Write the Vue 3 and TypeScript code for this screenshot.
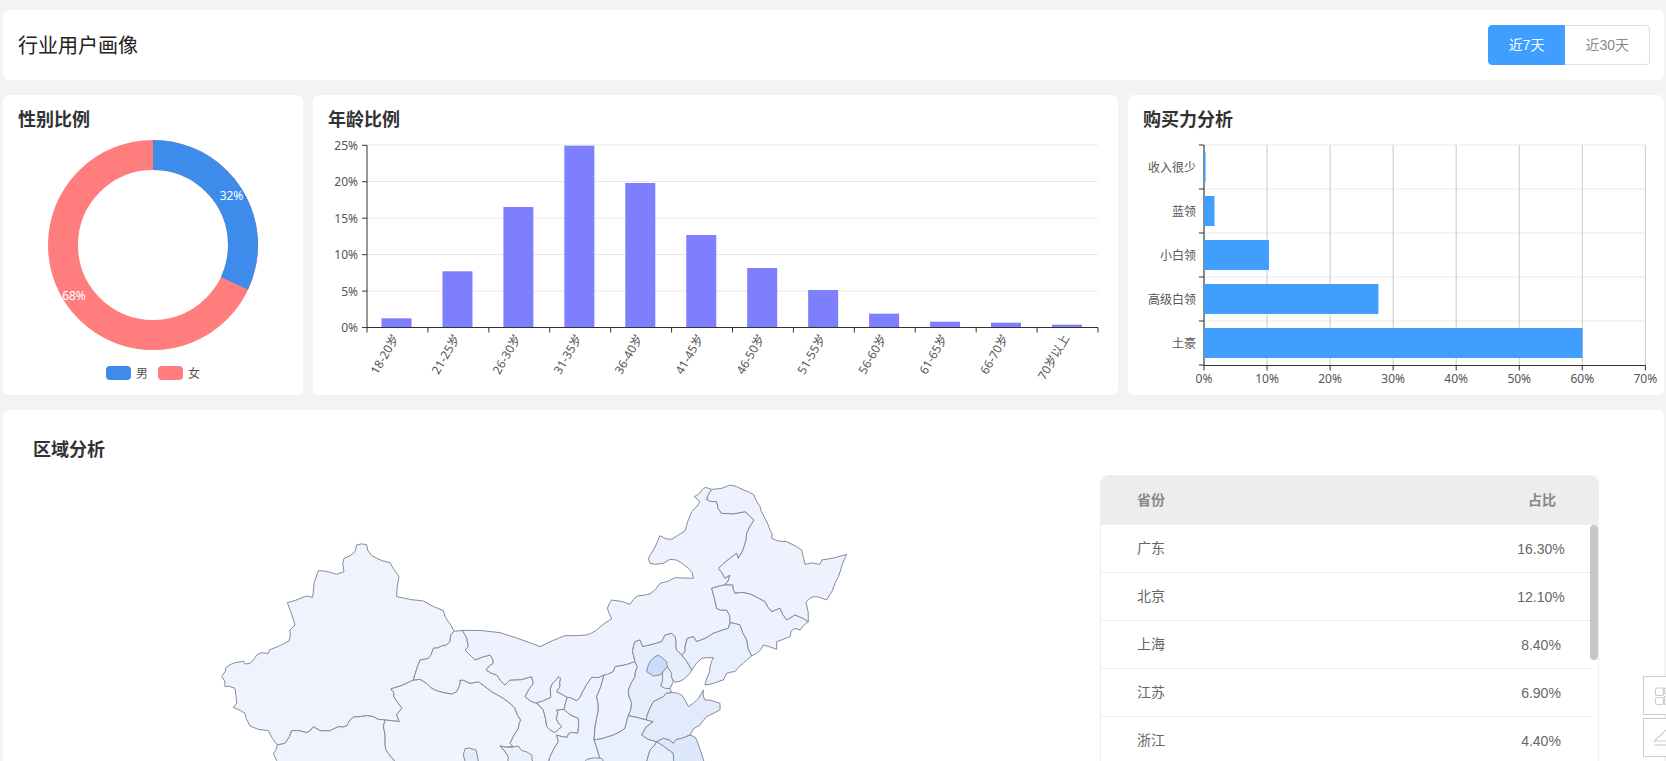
<script setup lang="ts">
// page coordinates are used as the viewBox of each chart
const ageGridLines = [145, 181.5, 218, 254.5, 291]
const yLabels = ['25%', '20%', '15%', '10%', '5%', '0%']
const ageBars = [
  { label: '18-20岁', top: 318.3 },
  { label: '21-25岁', top: 271.3 },
  { label: '26-30岁', top: 207 },
  { label: '31-35岁', top: 145.7 },
  { label: '36-40岁', top: 183 },
  { label: '41-45岁', top: 235 },
  { label: '46-50岁', top: 268 },
  { label: '51-55岁', top: 290 },
  { label: '56-60岁', top: 313.7 },
  { label: '61-65岁', top: 321.7 },
  { label: '66-70岁', top: 322.7 },
  { label: '70岁以上', top: 324.7 }
]
const ageStep = (1098 - 367) / 12
const ageCenter = (i: number): number => 396.5 + 60.95 * i

const powerRows = [
  { label: '收入很少', width: 1.6 },
  { label: '蓝领', width: 10.5 },
  { label: '小白领', width: 65 },
  { label: '高级白领', width: 174.4 },
  { label: '土豪', width: 378.5 }
]
const powerTicks = ['0%', '10%', '20%', '30%', '40%', '50%', '60%', '70%']
const powerX = (i: number): number => 1204 + i * 63.05

const provinces = [
  { name: '广东', share: '16.30%' },
  { name: '北京', share: '12.10%' },
  { name: '上海', share: '8.40%' },
  { name: '江苏', share: '6.90%' },
  { name: '浙江', share: '4.40%' }
]

// map outlines, traced in 3x crops of the map; each helper shifts one crop's origin
const at = (dx: number, dy: number) => (...v: number[]): number[] =>
  v.map((n, i) => n + (i % 2 ? dy : dx))
const a = at(0, 0)
const b = at(1050, 0)
const c = at(750, 510)
const d = at(1170, 420)

// long straight runs get a small kink so borders read as rough; the offset depends
// only on the two end points, so neighbouring regions share the same kink
const roughen = (pts: number[]): number[] => {
  const out: number[] = []
  for (let i = 0; i < pts.length; i += 2) {
    const x = pts[i]
    const y = pts[i + 1]
    const nx = pts[(i + 2) % pts.length]
    const ny = pts[(i + 3) % pts.length]
    out.push(x, y)
    if (Math.hypot(nx - x, ny - y) > 24) {
      const seed = x + nx + (y + ny) * 3
      out.push((x + nx) / 2 + (seed % 9) - 4, (y + ny) / 2 + ((seed * 7) % 9) - 4)
    }
  }
  return out
}

const shape = (fill: string, ...parts: number[][]) => ({
  fill,
  d: 'M' + roughen(parts.flat()).join(' ') + 'Z'
})

const regions = [
  shape('#eef3fe', a(470,225,500,224,503,240,530,265,570,278,597,320,590,380,670,393,730,422,745,455,762,484,750,515,725,528,700,535,685,565,660,570,640,630,572,657,582,680,606,715,590,735,598,755,555,750,520,740,480,740,450,750,440,768,415,770,388,783,360,782,340,770,320,788,275,782,255,820,232,825,205,782,150,768,135,730,100,712,110,700,105,655,75,650,65,620,78,592,105,578,130,573,135,582,150,580,170,555,205,550,208,540,267,513,270,480,285,465,262,398,318,378,338,382,355,302,410,313,432,305,432,265,465,245)),
  shape('#eef3fe', a(232,825,255,820,275,782,320,788,340,770,360,782,388,783,415,770,440,768,450,750,480,740,520,740,555,750,550,770,555,820,565,850,590,880,590,900,240,900,220,850)),
  shape('#f0f4fe', a(640,630,572,657,582,680,606,715,590,735,598,755,555,750,550,770,555,820,565,850,590,880,590,900,930,900,930,873,925,860,900,828,940,830,930,820,955,775,962,750,945,715,910,685,875,665,835,635,810,640,780,630,770,665,755,672,705,660,680,640,660,628)),
  shape('#eef3fe', a(762,484,787,481,805,530,795,540,825,570,870,555,880,580,858,600,890,615,915,645,930,630,995,620,1000,640,975,680,1010,700), c(280,210,290,260,315,278,335,260,318,235,320,210,342,208,385,235,383,280,355,282,352,292,320,285,325,305,300,350,300,390,180,390), a(930,873,925,860,900,828,940,830,930,820,955,775,962,750,945,715,910,685,875,665,835,635,810,640,780,630,770,665,755,672,705,660,680,640,660,628,640,630,660,570,685,565,700,535,725,528,750,515)),
  shape('#eaf0fd', c(185,322,205,318,215,332,245,345,255,390,175,390,175,350,150,318)),
  shape('#e5edfd', c(45,326,78,330,85,390,50,390,40,345)),
  shape('#eef3fe', c(260,188,302,172,307,130,325,110,332,115,330,140,320,155,352,172,342,208,320,210,318,235,335,260,315,278,290,260,280,210)),
  shape('#ecf1fe', c(352,172,380,182,395,160,425,112,462,105,440,170,445,210,432,300,445,340,460,390,300,390,300,350,325,305,320,285,352,292,355,282,383,280,385,235,342,208)),
  shape('#edf2fe', a(787,481,900,488,1000,522,1020,530,1095,497,1160,495), b(140,480,185,447,172,415,185,390,240,403,262,378,300,372,330,340,375,323,430,325,415,295,380,270,360,268,340,280,300,280,295,265,330,197,365,208,405,183,425,125,450,95,433,80,460,55,485,58,470,88,500,95,515,130,585,125,612,150,590,190,585,220,565,265,560,250,505,295,525,325,540,315,525,345,485,355,500,415,530,420,540,458,535,475,490,490,440,515,430,500,412,505,405,545,395,555,380,540,378,515,365,490,345,495,335,515,278,530,270,510,255,515,247,545,255,575), c(495,80,490,95,462,105,425,112,395,160,380,182,352,172,320,155,330,140,332,115,325,110,307,130,302,172,260,188), a(1010,700,975,680,1000,640,995,620,930,630,915,645,890,615,858,600,880,580,870,555,825,570,795,540,805,530)),
  shape('#edf2fe', b(485,58,540,45,585,62,612,75,630,110,645,145,660,180,665,205,710,215,755,240,765,283,810,283,815,270,890,253,875,290,855,340,830,390,790,380,768,397,775,455,735,435,710,450,690,415,665,425,645,395,600,372,555,370,548,345,525,345,540,315,525,325,505,295,560,250,565,265,585,220,590,190,612,150,585,125,515,130,500,95,470,88)),
  shape('#edf2fe', b(525,345,548,345,555,370,600,372,645,395,665,425,690,415,710,450,735,435,775,455,750,480,735,475,720,500,680,515,680,538,640,525,620,550,605,558,590,510,570,465,540,458,530,420,500,415,485,355)),
  shape('#e8effd', b(490,563,480,590,470,625,465,645,490,640,520,630,530,610,555,605,580,580,605,558,590,510,570,465,540,458,535,475,490,490,440,515,430,500,412,505,405,545,395,555,425,600,455,565)),
  shape('#edf2fe', c(462,105,490,95,495,80), b(255,575,262,590,255,620,235,660,245,700,235,737), c(525,265,490,285,432,300,445,210,440,170)),
  shape('#e6eefd', b(255,575,247,545,255,515,270,510,278,530,335,515,345,495,365,490,378,515,380,540,395,555,425,600,405,625,375,637,365,625,360,655,365,668,340,680,310,695,290,740,290,750,235,737,245,700,235,660,255,620,262,590)),
  shape('#e8effd', d(218,185,232,170,245,190,250,215,240,235,212,228,218,195)),
  shape('#c9dcfb', d(170,185,180,155,205,135,230,155,232,170,218,185,212,195,190,198)),
  shape('#e9f0fd', c(432,300,490,285,525,265), b(235,737,290,750,310,755,275,795,320,815,300,840,285,900), c(460,390,445,340)),
  shape('#e2eafc', b(365,668,395,675,408,695,415,710,430,700,460,660,465,690,510,700,510,720,470,740,450,765,420,795,395,805,370,820,340,805,320,815,275,795,310,755,290,750,290,740,310,695,340,680)),
  shape('#e6eefd', b(320,815,370,850,380,900,285,900,300,840)),
  shape('#dde8fc', b(320,815,340,805,370,820,395,805,420,795,440,810,470,900,380,900,370,850)),
  shape('#e6eefd', c(410,358,455,355,470,390,400,390))
]
</script>

<template>
  <div class="page">
    <header class="card top-bar">
      <h1>行业用户画像</h1>
      <div class="range">
        <button class="active">近7天</button>
        <button>近30天</button>
      </div>
    </header>

    <section class="charts">
      <div class="card chart-card">
        <h2>性别比例</h2>
        <svg class="chart" width="300" height="264" viewBox="3 131 300 264">
          <circle class="ring ring-female" cx="153" cy="245" r="90" pathLength="100" />
          <circle class="ring ring-male" cx="153" cy="245" r="90" pathLength="100" stroke-dasharray="32 68" transform="rotate(-90 153 245)" />
          <text class="pct" x="231.5" y="196.5">32%</text>
          <text class="pct" x="74" y="296.5">68%</text>
          <rect x="106" y="366" width="25" height="14" rx="4" fill="#3d8ceb" />
          <text class="axis" x="136" y="375">男</text>
          <rect x="158" y="366" width="25" height="14" rx="4" fill="#ff7d7d" />
          <text class="axis" x="188" y="375">女</text>
        </svg>
      </div>

      <div class="card chart-card">
        <h2>年龄比例</h2>
        <svg class="chart" width="805" height="264" viewBox="313 131 805 264">
          <line v-for="y in ageGridLines" :key="y" class="grid" x1="367" x2="1098" :y1="y" :y2="y" />
          <rect v-for="(bar, i) in ageBars" :key="bar.label" class="age-bar" :x="ageCenter(i) - 15" :y="bar.top" width="30" :height="327.5 - bar.top" />
          <line class="line" x1="367" x2="367" y1="145" y2="327.5" />
          <line class="line" x1="367" x2="1098" y1="327.5" y2="327.5" />
          <g v-for="(label, i) in yLabels" :key="label">
            <line class="line" x1="362" x2="367" :y1="145.3 + i * 36.45" :y2="145.3 + i * 36.45" />
            <text class="axis end" x="358" :y="146.5 + i * 36.45">{{ label }}</text>
          </g>
          <line v-for="i in 13" :key="i" class="line" :x1="367 + ageStep * (i - 1)" :x2="367 + ageStep * (i - 1)" y1="327.5" y2="332.5" />
          <text
            v-for="(bar, i) in ageBars"
            :key="bar.label"
            class="axis end"
            :x="ageCenter(i)"
            y="336"
            :transform="`rotate(-60 ${ageCenter(i)} 336)`"
          >{{ bar.label }}</text>
        </svg>
      </div>

      <div class="card chart-card">
        <h2>购买力分析</h2>
        <svg class="chart" width="536" height="264" viewBox="1128 131 536 264">
          <line v-for="i in 5" :key="i" class="grid" x1="1204" x2="1645" :y1="145 + (i - 1) * 44" :y2="145 + (i - 1) * 44" />
          <line v-for="(t, i) in powerTicks" :key="t" class="grid-v" :x1="powerX(i)" :x2="powerX(i)" y1="145" y2="365.5" />
          <line class="line" x1="1204" x2="1204" y1="145" y2="365.5" />
          <rect v-for="(row, i) in powerRows" :key="row.label" class="power-bar" x="1204" :y="152 + i * 44" :width="row.width" height="30" />
          <line class="line" x1="1204" x2="1645.5" y1="365.5" y2="365.5" />
          <line v-for="i in 6" :key="i" class="line" x1="1199" x2="1204" :y1="145 + (i - 1) * 44" :y2="145 + (i - 1) * 44" />
          <text v-for="(row, i) in powerRows" :key="row.label" class="axis end" x="1196" :y="169 + i * 44">{{ row.label }}</text>
          <g v-for="(t, i) in powerTicks" :key="t">
            <line class="line" :x1="powerX(i)" :x2="powerX(i)" y1="365.5" y2="370.5" />
            <text class="axis mid" :x="powerX(i)" y="379.5">{{ t }}</text>
          </g>
        </svg>
      </div>
    </section>

    <section class="card region">
      <h2>区域分析</h2>
      <div class="region-body">
        <svg class="map" width="1067" height="286" viewBox="-501 15 3201 858">
          <path v-for="(r, i) in regions" :key="i" :d="r.d" :fill="r.fill" />
        </svg>
        <div class="table">
          <div class="row head">
            <span>省份</span>
            <span class="share">占比</span>
          </div>
          <div class="table-body">
            <div v-for="p in provinces" :key="p.name" class="row">
              <span class="name">{{ p.name }}</span>
              <span class="share">{{ p.share }}</span>
            </div>
            <div class="thumb"></div>
          </div>
        </div>
      </div>
    </section>

    <aside class="side-tools">
      <button class="tool">
        <svg width="38" height="37" viewBox="0 0 38 37">
          <rect x="11.5" y="11" width="8" height="7.5" rx="1.5" />
          <rect x="11.5" y="20.5" width="8" height="7" rx="1.5" />
          <rect x="20.5" y="11" width="8" height="6" rx="1.5" />
          <rect x="20.5" y="19" width="8" height="8.5" rx="1.5" />
        </svg>
      </button>
      <button class="tool">
        <svg width="38" height="37" viewBox="0 0 38 37">
          <path d="M10.5 22 L22.5 10.5 L34.5 22 Z" />
          <path d="M10.5 26 H34.5" />
        </svg>
      </button>
    </aside>
  </div>
</template>

<style scoped>
.page {
  position: relative;
  box-sizing: border-box;
  width: 1666px;
  height: 761px;
  padding: 10px 2px 0 3px;
  overflow: hidden;
  background: #f3f3f3;
  font-family: "Liberation Sans", "Noto Sans CJK SC", sans-serif;
}

.card {
  background: #fff;
  border-radius: 6px;
}

.top-bar {
  display: flex;
  align-items: center;
  justify-content: space-between;
  height: 70px;
  padding: 0 14px 0 15px;
}

h1 {
  margin: 0;
  padding-bottom: 2px;
  font-size: 20px;
  font-weight: 400;
  color: #222;
}

h2 {
  margin: 0;
  font-size: 18px;
  line-height: 24px;
  font-weight: 700;
  color: #333;
}

.range {
  display: flex;
}

.range button {
  height: 40px;
  padding: 0 20px 2px;
  border: 1px solid #dcdfe6;
  border-left: 0;
  border-radius: 0 4px 4px 0;
  background: #fff;
  color: #888;
  font: inherit;
  font-size: 14px;
}

.range .active {
  border: 1px solid #409eff;
  border-radius: 4px 0 0 4px;
  background: #409eff;
  color: #fff;
}

.charts {
  display: grid;
  grid-template-columns: 300px 805px 536px;
  gap: 10px;
  margin-top: 15px;
}

.chart-card {
  height: 300px;
}

.chart-card h2 {
  margin-bottom: -1px;
  padding: 13px 0 0 15px;
}

.chart {
  display: block;
}

.ring {
  fill: none;
  stroke-width: 30;
}

.ring-female {
  stroke: #ff7d7d;
}

.ring-male {
  stroke: #3d8ceb;
}

.pct {
  font-size: 12px;
  fill: #fff;
  text-anchor: middle;
  dominant-baseline: middle;
  font-family: "Noto Sans", "Noto Sans CJK SC", sans-serif;
}

.axis {
  font-size: 12px;
  fill: #555;
  dominant-baseline: middle;
  font-family: "Noto Sans", "Noto Sans CJK SC", sans-serif;
}

.end {
  text-anchor: end;
}

.mid {
  text-anchor: middle;
}

.grid {
  stroke: #e8e8e8;
  stroke-width: 1;
}

.grid-v {
  stroke: #c8c8c8;
  stroke-width: 1;
}

.line {
  stroke: #333;
  stroke-width: 1;
}

.age-bar {
  fill: #7d7fff;
}

.power-bar {
  fill: #409eff;
}

.region {
  margin-top: 15px;
  height: 400px;
  padding: 28px 0 0 30px;
}

.region-body {
  display: flex;
  margin-top: 13px;
}

.map {
  display: block;
  flex-shrink: 0;
  overflow: hidden;
}

.map path {
  stroke: #888c96;
  stroke-width: 3;
  stroke-linejoin: round;
}

.table {
  box-sizing: border-box;
  width: 499px;
  border: 1px solid #eee;
  border-top-left-radius: 8px;
  border-top-right-radius: 8px;
  font-size: 14px;
  color: #666;
}

.row {
  display: flex;
  justify-content: space-between;
  align-items: center;
  box-sizing: border-box;
  width: 491px;
  height: 48px;
  padding-left: 36px;
  border-bottom: 1px solid #eee;
}

.name {
  padding-bottom: 4px;
}

.head {
  width: auto;
  height: 49px;
  padding-bottom: 4px;
  border-bottom: 0;
  border-top-left-radius: 8px;
  border-top-right-radius: 8px;
  background: #ededed;
  color: #888;
  font-weight: 700;
}

.share {
  width: 102px;
  text-align: center;
}

.head .share {
  margin-right: 5px;
}

.table-body {
  position: relative;
}

.thumb {
  position: absolute;
  top: 0;
  right: 0;
  width: 8px;
  height: 135px;
  border-radius: 4px;
  background: #c6c6c6;
}

.side-tools {
  position: absolute;
  top: 676px;
  left: 1643px;
  display: flex;
  flex-direction: column;
  gap: 3px;
}

.tool {
  display: block;
  width: 40px;
  height: 39px;
  padding: 0;
  border: 1px solid #ccc;
  background: #fff;
}

.tool svg {
  display: block;
  fill: none;
  stroke: #ccc;
  stroke-width: 1.2;
}
</style>
